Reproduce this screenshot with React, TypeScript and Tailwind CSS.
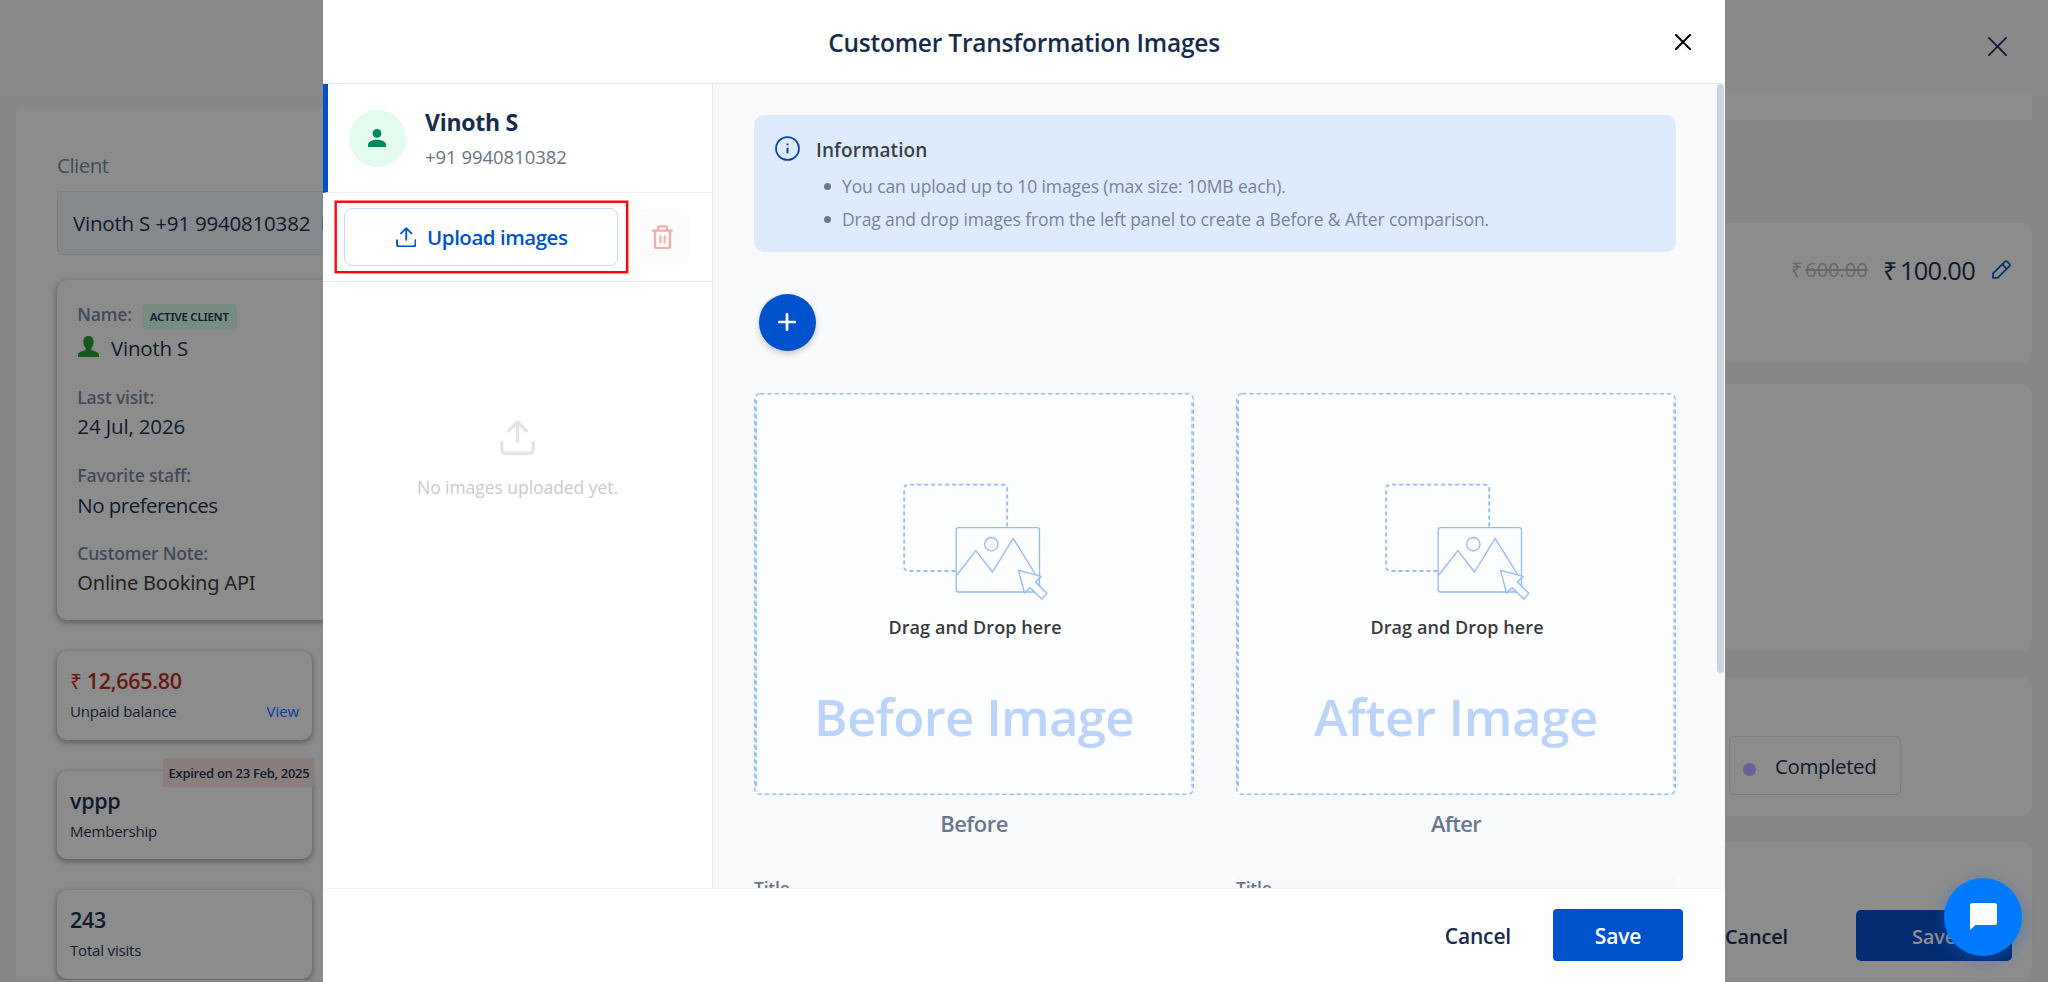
import React from 'react';

interface StatCardProps {
  title: React.ReactNode;
  subtitle: string;
  danger?: boolean;
  action?: string;
  badge?: string;
}

interface DropZoneProps {
  heading: string;
  headingClass: string;
  label: string;
  labelClass: string;
  titleClass?: string;
}

const UploadIcon: React.FC<{ className: string; strokeWidth: number }> = ({ className, strokeWidth }) => (
  <svg
    viewBox="0 0 61 61"
    className={className}
    fill="none"
    stroke="currentColor"
    strokeWidth={strokeWidth}
    strokeLinecap="round"
    strokeLinejoin="round"
  >
    <path d="M3 39v12q0 7 7 7h41q7 0 7-7V39" />
    <path d="M30.5 38V4M15 19 30.5 3.5 46 19" />
  </svg>
);

const CloseIcon: React.FC<{ className: string; strokeWidth: number }> = ({ className, strokeWidth }) => (
  <svg viewBox="0 0 20 20" className={className} fill="none" stroke="currentColor" strokeWidth={strokeWidth}>
    <path d="M1 1 19 19M19 1 1 19" strokeLinecap="round" />
  </svg>
);

const TrashIcon = () => (
  <svg
    viewBox="0 0 63 74"
    className="h-[24.5px] w-[21px] text-[#eeb0a4]"
    fill="none"
    stroke="currentColor"
    strokeWidth="7"
    strokeLinecap="round"
    strokeLinejoin="round"
  >
    <path d="M3.500 17h56M9 17v47q0 6 6 6h33q6 0 6-6V17M18 16V10q0-6 6-6h15q6 0 6 6v6" />
    <path d="M25 34v19M38 34v19" strokeWidth="6" />
  </svg>
);

const PencilIcon = () => (
  <svg viewBox="0 0 54 54" className="h-[19px] w-[19px]" fill="none" stroke="#0b3074" strokeWidth="5" strokeLinejoin="round">
    <path d="M3 51V38L36 5q4-4 8 0l5 5q4 4 0 8L16 51z" />
    <path d="M29 12 42 25" />
  </svg>
);

const DragIllustration = () => (
  <svg
    viewBox="486 640 440 354"
    className="ml-[2px] h-[118px] w-[147px]"
    fill="none"
    stroke="#90bbff"
    strokeWidth="4"
    strokeLinejoin="round"
  >
    <path d="M646 904H505q-13 0-13-13V658q0-13 13-13h283q13 0 13 13v114" strokeWidth="5.5" strokeDasharray="12 9" />
    <rect x="648" y="774" width="250" height="193" rx="7" fill="#fdfeff" />
    <circle cx="753.500" cy="823.500" r="20" />
    <path d="M650 916 707 843 757 907 819 806 886 914" />
    <path d="M835 902 903 920 886 937 920 971 905 988 870 954 853 970z" fill="#fdfeff" />
  </svg>
);

const DashedFrame = () => (
  <svg viewBox="0 0 440 402" className="absolute inset-0 h-full w-full" fill="none" stroke="#8fbeff">
    <rect x="0.700" y="0.700" width="438.600" height="400.600" rx="5.500" strokeWidth="1.4" strokeDasharray="4.300 2.900" />
    <path d="M2 7v388" strokeWidth="1.800" strokeDasharray="4.300 2.900" />
    <path d="M438 9v385" strokeWidth="1.300" strokeDasharray="4.300 2.900" />
  </svg>
);

const StatCard: React.FC<StatCardProps> = ({ title, subtitle, danger, action, badge }) => (
  <div className="relative h-[88.5px] w-[255px] rounded-[10px] bg-[#8c8c8c] px-[13px] pt-4 shadow-[0_2px_5px_1px_rgba(0,0,0,0.3)]">
    {badge && (
      <span className="absolute -top-[13px] -right-[2px] h-[29px] w-[151px] rounded-[3px] bg-[#8a7e7c] pl-px text-center text-[13px] leading-[30px] font-semibold tracking-[-0.3px] whitespace-nowrap">
        {badge}
      </span>
    )}
    <div
      className={`h-7 text-[21.5px] leading-7 font-semibold tracking-[-0.3px] ${danger ? 'text-[#67190f]' : 'text-[#0f1a2e]'}`}
    >
      {title}
    </div>
    <div className="mt-[5px] flex justify-between text-[15px] leading-[22px] tracking-[-0.18px]">
      <span>{subtitle}</span>
      {action && <span className="tracking-[-0.1px] text-[#0b3a9c]">{action}</span>}
    </div>
  </div>
);

const DetailRow: React.FC<{ label: string; value: string; valueClass: string }> = ({ label, value, valueClass }) => (
  <div className="mt-[21px] -ml-[0.7px]">
    <div className="text-[17.5px] leading-[26px] font-semibold tracking-[-0.2px] text-[#424a59]">{label}</div>
    <div className={`mt-px leading-[30px] ${valueClass}`}>{value}</div>
  </div>
);

const ClientSidebar = () => (
  <aside className="ml-4 mt-4 h-[872px] w-[320px] shrink-0 overflow-hidden rounded-tl-[4px] bg-[#8c8c8c] pl-[41px] pt-[43px] text-[#0f1a2e]">
    <div className="text-[20.5px] leading-7 tracking-[-0.5px] text-[#424a59]">Client</div>
    <div className="mt-3 flex h-16 w-[300px] items-center rounded-[5px] border border-[#7c8085] bg-[#86898c] pl-[15px] text-[20.5px] tracking-[-0.2px] whitespace-nowrap">
      Vinoth S +91 9940810382
      <span className="ml-[12px] h-[13px] w-4 bg-[#4463a0]" />
    </div>

    <div className="mt-[25px] h-[340px] w-[300px] rounded-[10px] bg-[#8c8c8c] pl-[21px] pt-[21px] shadow-[0_2px_5px_1px_rgba(0,0,0,0.3)]">
      <div className="flex h-[26px] items-start">
        <span className="-ml-[0.7px] text-[17.5px] leading-[26px] font-semibold tracking-[-0.2px] text-[#424a59]">Name:</span>
        <span className="ml-[10px] mt-[3px] h-[26px] w-[95px] rounded-[4px] bg-[#778c82] text-center font-['Noto_Sans'] text-[11.5px] leading-[26px] font-semibold tracking-[-0.25px]">
          ACTIVE CLIENT
        </span>
      </div>
      <div className="mt-[6px] flex h-[30px] text-[20.5px] leading-[30px] tracking-[-0.2px]">
        <svg viewBox="0 0 63 63" className="mt-[3px] mr-3 h-[21px] w-[21px]" fill="#14591b">
          <path d="M31.500 0C42 0 47 7 47 17c0 9-3 15-7 20v5c8 3 23 7 23 14v7H0v-7c0-7 15-11 23-14v-5c-4-5-7-11-7-20C16 7 21 0 31.500 0z" />
        </svg>
        Vinoth S
      </div>
      <DetailRow label="Last visit:" value="24 Jul, 2026" valueClass="text-[20.5px] tracking-[-0.15px]" />
      <DetailRow
        label="Favorite staff:"
        value="No preferences"
        valueClass="relative top-px text-[20.5px] tracking-[-0.53px]"
      />
      <DetailRow
        label="Customer Note:"
        value="Online Booking API"
        valueClass="relative top-px font-['Noto_Sans'] text-[20px] tracking-[-0.2px] text-[#222222]"
      />
    </div>

    <div className="mt-[31px] flex flex-col gap-[31px]">
      <StatCard
        title={
          <>
            <span className="mr-[5px] text-[21px] leading-none font-normal">₹</span>12,665.80
          </>
        }
        subtitle="Unpaid balance"
        action="View"
        danger
      />
      <StatCard title="vppp" subtitle="Membership" badge="Expired on 23 Feb, 2025" />
      <StatCard title="243" subtitle="Total visits" />
    </div>
  </aside>
);

const BookingPanel = () => (
  <section className="mr-4 flex w-[327px] flex-col text-[#0f1a2e]">
    <div className="h-7 bg-[#8c8c8c]" />
    <div className="mt-[103px] flex h-[140px] items-start justify-end rounded-[10px] bg-[#8c8c8c] pt-[29px] pr-[21px]">
      <span className="mt-[3px] flex text-[20px] leading-[30px] text-[#64676d]">
        <span className="mr-[3px] text-[20px]">₹</span>
        <span className="line-through">600.00</span>
      </span>
      <span className="ml-[15px] flex text-[25.5px] leading-[36px] tracking-[-0.75px]">
        <span className="mr-[4px] text-[25px]">₹</span>100.00
      </span>
      <span className="mt-2 ml-[17px]">
        <PencilIcon />
      </span>
    </div>
    <div className="mt-[21px] h-[267px] rounded-[10px] bg-[#8c8c8c]" />
    <div className="mt-[26px] h-[139px] rounded-[10px] bg-[#8c8c8c] pt-[59px] pl-6">
      <div className="flex h-[59px] w-[172px] items-center rounded-[5px] border border-[#7d7e80] pl-[13px] text-[20.5px] tracking-[-0.38px]">
        <span className="mt-[7px] mr-[19px] h-[13px] w-[13px] rounded-full bg-[#6a5f99]" />
        <span className="pt-[2px]">Completed</span>
      </div>
    </div>
    <div className="mt-[26px] flex h-[139px] items-start justify-end rounded-[10px] bg-[#8c8c8c] pt-[68px] pr-5 text-[20px] leading-[53px] font-semibold tracking-[-0.17px]">
      <span className="mr-[68px]">Cancel</span>
      <span className="h-[51px] w-[156px] rounded-[5px] bg-[#052c70] text-center text-[#8f8f8f]">Save</span>
    </div>
  </section>
);

const DropZone: React.FC<DropZoneProps> = ({ heading, headingClass, label, labelClass, titleClass = '' }) => (
  <div className="w-[440px]">
    <div className="relative flex h-[402px] flex-col items-center rounded-[6px] bg-[#fdfeff] pt-[90px]">
      <DashedFrame />
      <DragIllustration />
      <div className="mt-[13px] ml-[2px] text-[18px] leading-[26px] font-semibold tracking-[0.09px] text-[#383a3e]">
        Drag and Drop here
      </div>
      <div className={`mt-[41px] text-[51px] leading-[70px] font-semibold whitespace-nowrap text-[#bcd4f9] ${headingClass}`}>
        {heading}
      </div>
    </div>
    <div className={`mt-[13px] text-center text-[22px] leading-[30px] font-semibold text-[#6b7790] ${labelClass}`}>
      {label}
    </div>
    <div className={`mt-[37px] text-[17.5px] leading-[26px] font-semibold tracking-[-0.2px] text-[#6b7790] ${titleClass}`}>
      Title
    </div>
  </div>
);

const ImagesSidebar = () => (
  <aside className="w-[390px] shrink-0 border-r border-[#eaecef] bg-white">
    <div className="flex h-[109px] items-center gap-[19px] border-b border-l-[5px] border-b-[#eeeff1] border-l-[#0052cc] pl-[21px]">
      <div className="flex h-[57px] w-[57px] items-center justify-center rounded-full bg-[#e3fcef]">
        <svg viewBox="0 0 53 53" className="mr-px h-[18px] w-[18px]" fill="#04875a">
          <circle cx="26.500" cy="13" r="13" />
          <path d="M0 53v-6c0-10 14-15 26.500-15S53 37 53 47v6z" />
        </svg>
      </div>
      <div>
        <div className="text-[23px] leading-[30px] font-bold tracking-[-0.26px] text-[#172b4d]">Vinoth S</div>
        <div className="mt-2 text-[18.5px] leading-6 tracking-[-0.03px] text-[#6b7485]">+91 9940810382</div>
      </div>
    </div>

    <div className="relative flex h-[89px] items-start gap-4 border-b border-[#e6e8ea] pt-[15px] pl-[21px]">
      <button className="flex h-[58px] w-[274px] items-center justify-center gap-[11px] rounded-[8px] border border-[#c9d9f6] bg-white pl-px text-[20.5px] font-semibold tracking-[-0.48px] text-[#0052cc]">
        <UploadIcon className="h-[20.5px] w-[20.5px]" strokeWidth={5.5} />
        Upload images
      </button>
      <button className="mt-px flex h-14 w-14 items-center justify-center rounded-[8px] bg-[#fcfcfc]">
        <TrashIcon />
      </button>
      <svg className="pointer-events-none absolute top-[7px] left-[11px] h-[74px] w-[295px]" fill="none">
        <rect x="1.700" y="1.700" width="291.500" height="70.500" stroke="#ff0505" strokeWidth="2.400" />
      </svg>
    </div>

    <div className="flex flex-col items-center pt-[138px]">
      <UploadIcon className="h-[35px] w-[35px] text-[#e2e6e9]" strokeWidth={5.8} />
      <div className="mt-5 text-[17.5px] leading-6 tracking-[-0.05px] text-[#c7cbd6]">No images uploaded yet.</div>
    </div>
  </aside>
);

const TransformationModal = () => {
  const hints = [
    'You can upload up to 10 images (max size: 10MB each).',
    'Drag and drop images from the left panel to create a Before & After comparison.'
  ];

  return (
    <div className="absolute top-0 left-[323px] flex h-[982px] w-[1402px] flex-col bg-white">
      <header className="flex h-[84px] shrink-0 items-center border-b border-[#e6e8ea] pr-[34px] pl-[50px]">
        <h2 className="flex-1 pt-[3px] text-center text-[24.5px] font-semibold tracking-[-0.22px] text-[#172b4d]">
          Customer Transformation Images
        </h2>
        <CloseIcon className="h-4 w-4 text-black" strokeWidth={2.4} />
      </header>

      <div className="flex h-[804px] shrink-0 overflow-hidden">
        <ImagesSidebar />
        <main className="flex-1 bg-[#f9fafc] pt-[31px] pl-[41px]">
          <div className="flex h-[137px] w-[922px] rounded-[10px] bg-[#deebff] pt-[21px] pl-[21px]">
            <svg viewBox="0 0 24 24" className="h-[25px] w-[25px]" fill="none" stroke="#0747a6" strokeWidth="1.7">
              <circle cx="12" cy="12" r="11" />
              <path d="M12 11.200v5.300M12 7.200v1.700" strokeWidth="2" />
            </svg>
            <div className="ml-4">
              <div className="text-[19px] leading-7 font-semibold tracking-[0.12px] text-[#3b3f45]">Information</div>
              <ul className="mt-[6px] ml-2">
                {hints.map((hint) => (
                  <li key={hint} className="flex items-center text-[17.5px] leading-[33px] tracking-[-0.11px] text-[#76839a]">
                    <span className="mr-[11px] h-[7px] w-[7px] rounded-full bg-[#6b7790]" />
                    {hint}
                  </li>
                ))}
              </ul>
            </div>
          </div>

          <button className="mt-[42px] ml-[5px] flex h-[57px] w-[57px] items-center justify-center rounded-full bg-[#0052cc] shadow-[0_3px_6px_rgba(0,0,0,0.2)]">
            <svg viewBox="0 0 18 18" className="mr-px mb-px h-[18px] w-[18px]" stroke="white" strokeWidth="2.700" strokeLinecap="round">
              <path d="M9 1.300v15.400M1.300 9h15.400" />
            </svg>
          </button>

          <div className="mt-[42px] flex gap-[42px]">
            <DropZone heading="Before Image" headingClass="tracking-[-0.73px]" label="Before" labelClass="tracking-[-0.53px]" />
            <DropZone
              heading="After Image"
              headingClass="tracking-[-0.4px]"
              label="After"
              labelClass="tracking-[-0.67px]"
              titleClass="bg-[#f7f8fa]"
            />
          </div>
        </main>
        <div className="w-[8px] shrink-0 bg-[#f9fafc]">
          <div className="h-[589px] w-[7px] rounded-full bg-[#cad5e1]" />
        </div>
      </div>

      <footer className="flex h-[94px] items-start justify-end gap-[42px] border-t border-[#f2f3f4] pt-5 pr-[42px] text-[21px] leading-[55px] font-semibold tracking-[-0.17px]">
        <button className="h-[52px] text-[#172b4d]">Cancel</button>
        <button className="h-[52px] w-[130px] rounded-[4px] bg-[#0052cc] text-white">Save</button>
      </footer>
    </div>
  );
};

const App: React.FC = () => {
  return (
    <div className="relative h-[982px] w-[2048px] overflow-hidden bg-[#878787] font-['Open_Sans',sans-serif]">
      <div className="flex h-[92px] items-start justify-end bg-[#898989] pt-[37px] pr-[41px]">
        <CloseIcon className="h-[19px] w-[19px] text-[#0f1d33]" strokeWidth={2} />
      </div>
      <div className="flex justify-between">
        <ClientSidebar />
        <BookingPanel />
      </div>

      <TransformationModal />

      <button className="absolute top-[878px] left-[1944px] flex h-[78px] w-[78px] items-center justify-center rounded-full bg-[#007bff] shadow-[0_4px_16px_rgba(0,100,220,0.4)]">
        <svg viewBox="0 0 27 27" className="mb-px h-[27px] w-[27px]" fill="white">
          <path d="M2.500 0h22q2.500 0 2.500 2.500v17q0 2.500-2.500 2.500H5.500L0 27V2.500Q0 0 2.500 0z" />
        </svg>
      </button>
    </div>
  );
};

export default App;
